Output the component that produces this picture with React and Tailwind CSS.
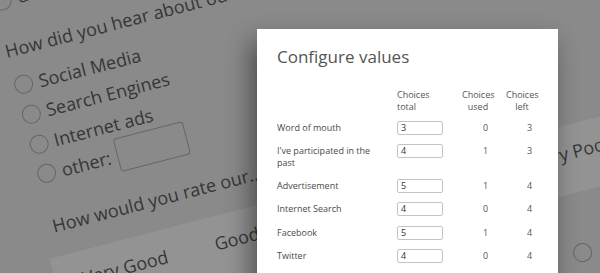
import React from 'react';

// Survey page behind the dialog (tilted, dimmed)
const Radio = ({ className = '' }) => (
  <div className={`w-[19px] h-[19px] rounded-full border-[1.5px] border-[#666] shrink-0 ${className}`}></div>
);

const Option = ({ label, children }) => (
  <div className="h-[30.6px] flex items-center">
    <Radio className="ml-[1.5px]" />
    <span className="ml-[6.5px] leading-[24px] whitespace-nowrap">{label}</span>
    {children}
  </div>
);

const ratings = ['Very Good', 'Good', 'Neutral', 'Poor', 'Very Poor'];

const SurveyBackdrop = () => (
  <div className="absolute left-[-34px] top-[-13px] w-[780px] h-[560px] origin-top-left rotate-[-14.5deg] bg-[#8a8a8a] text-[#363636] font-['Open_Sans',sans-serif] text-[18px]">
    <div className="pl-[20px] pt-[7px]">
      <Option label="decline to answer" />

      <div className="mt-[22px] h-[24px] leading-[24px] pl-[2px] whitespace-nowrap">
        How did you hear about our company?
      </div>

      <div className="mt-[10px]">
        <Option label="Social Media" />
        <Option label="Search Engines" />
        <Option label="Internet ads" />
        <Option label="other:">
          <div className="ml-[7px] w-[72px] h-[34px] border border-[#676767] rounded-[3px]"></div>
        </Option>
      </div>

      <div className="mt-[24.6px] h-[24px] leading-[24px] pl-[4px] whitespace-nowrap">
        How would you rate our..
      </div>

      <div className="mt-[19px] ml-[-7px] w-[720px] h-[68px] bg-[#939393] pt-[15px] pl-[13.4px] flex">
        {ratings.map((r) => (
          <div key={r} className="w-[115.25px] text-center leading-[24px] whitespace-nowrap">
            {r}
          </div>
        ))}
      </div>

      <div className="mt-[50.5px] ml-[500.5px]">
        <Radio />
      </div>
    </div>
  </div>
);

const rows = [
  { label: "Word of mouth", total: 3, used: 0, left: 3 },
  { label: "I've participated in the past", total: 4, used: 1, left: 3 },
  { label: "Advertisement", total: 5, used: 1, left: 4 },
  { label: "Internet Search", total: 4, used: 0, left: 4 },
  { label: "Facebook", total: 5, used: 1, left: 4 },
  { label: "Twitter", total: 4, used: 0, left: 4 },
];

const ConfigureDialog = () => (
  <div className="absolute left-[257px] top-[29px] w-[301px] h-[260px] bg-white shadow-[-6px_12px_24px_rgba(0,0,0,0.45)] pl-[20px] pt-[16px] font-['Open_Sans',sans-serif]">
    <h2 className="text-[17px] leading-[24px] text-[#555]">Configure values</h2>

    <div className="mt-[19.6px] flex items-start text-[9px] leading-[12px] text-[#555]">
      <div className="w-[120px]"></div>
      <div className="w-[65px]">
        Choices<br />total
      </div>
      <div className="w-[44px]">
        <div className="w-[32px] text-center">
          Choices<br />used
        </div>
      </div>
      <div>
        <div className="w-[32px] text-center">
          Choices<br />left
        </div>
      </div>
    </div>

    <div className="mt-[8px] flex flex-col gap-[9.5px] text-[9px] leading-[12px] text-[#4a4a4a]">
      {rows.map((row) => (
        <div key={row.label} className="flex items-start">
          <div className="w-[100px] mr-[20px] pt-[1px]">{row.label}</div>
          <div className="w-[65px]">
            <div className="w-[46px] h-[14px] border border-[#c4c4c4] rounded-[2px] pl-[3px] leading-[12px] text-[#333]">
              {row.total}
            </div>
          </div>
          <div className="w-[44px] pl-[21px] pt-[1px] text-[#555]">{row.used}</div>
          <div className="pl-[21px] pt-[1px] text-[#555]">{row.left}</div>
        </div>
      ))}
    </div>
  </div>
);

export default function App() {
  return (
    <div className="relative w-[600px] h-[274px] overflow-hidden bg-[#8a8a8a] border-b border-[#d2d2d2]">
      <SurveyBackdrop />
      <ConfigureDialog />
    </div>
  );
}
